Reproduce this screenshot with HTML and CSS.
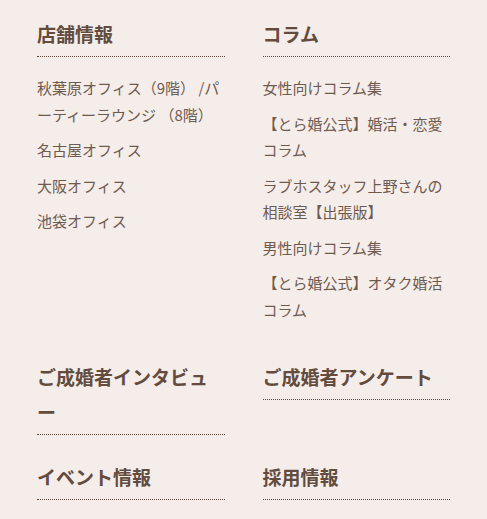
FILE: index.html
```html
<!DOCTYPE html>
<html lang="ja">
<head>
<meta charset="utf-8">
<link rel="stylesheet" href="styles.css">
</head>
<body>
<div class="footer-nav">
  <section class="nav-col">
    <h3 class="nav-heading">店舗情報</h3>
    <ul class="nav-links">
      <li>秋葉原オフィス（9階） /パーティーラウンジ （8階）</li>
      <li>名古屋オフィス</li>
      <li>大阪オフィス</li>
      <li>池袋オフィス</li>
    </ul>
  </section>
  <section class="nav-col">
    <h3 class="nav-heading">コラム</h3>
    <ul class="nav-links">
      <li>女性向けコラム集</li>
      <li>【とら婚公式】婚活・恋愛コラム</li>
      <li>ラブホスタッフ上野さんの相談室【出張版】</li>
      <li>男性向けコラム集</li>
      <li>【とら婚公式】オタク婚活コラム</li>
    </ul>
  </section>
  <section class="nav-col">
    <h3 class="nav-heading">ご成婚者インタビュー</h3>
  </section>
  <section class="nav-col">
    <h3 class="nav-heading">ご成婚者アンケート</h3>
  </section>
  <section class="nav-col">
    <h3 class="nav-heading">イベント情報</h3>
  </section>
  <section class="nav-col">
    <h3 class="nav-heading">採用情報</h3>
  </section>
</div>
</body>
</html>
```
FILE: styles.css
```css
html, body {
  margin: 0;
  padding: 0;
  background: #f5edea;
}
body {
  font-family: "Noto Sans CJK JP", "Noto Sans", sans-serif;
  line-break: normal;
}
.footer-nav {
  display: grid;
  grid-template-columns: 1fr 1fr;
  column-gap: 38px;
  row-gap: 24px;
  align-items: start;
  padding: 16px 37px 0;
}
.nav-col {
  min-width: 0;
}
.nav-heading {
  margin: 0;
  font-size: 19px;
  font-weight: 700;
  line-height: 35px;
  color: #634c3e;
  padding-bottom: 5px;
  border-bottom: 1px dotted #5a463a;
}
.nav-links {
  list-style: none;
  margin: 18px 0 12px;
  padding: 0;
}
.nav-links li {
  font-size: 15px;
  line-height: 26.5px;
  color: #6e5b50;
  margin-bottom: 9px;
}
.nav-links li:last-child {
  margin-bottom: 0;
}
```
